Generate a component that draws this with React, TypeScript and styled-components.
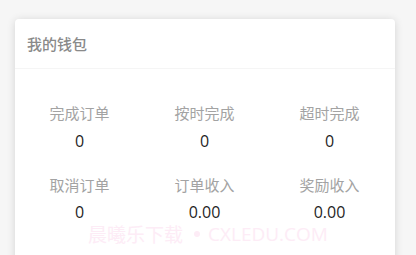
import React from "react";
import styled, { createGlobalStyle } from "styled-components";

const Global = createGlobalStyle`
  html, body { margin: 0; padding: 0; background: #f6f6f6; }
  body { font-family: "Noto Sans CJK SC", "Noto Sans", sans-serif; overflow: hidden; }
`;

const Page = styled.div`
  width: 416px;
  height: 255px;
  padding: 19px 21px 0 15px;
  box-sizing: border-box;
  position: relative;
  overflow: hidden;
`;

const Card = styled.div`
  background: #fff;
  border-radius: 4px;
  box-shadow: 0 1px 8px rgba(0, 0, 0, 0.14);
  height: 260px;
`;

const Header = styled.div`
  height: 49px;
  line-height: 49px;
  padding-left: 12px;
  font-size: 15px;
  font-weight: 500;
  color: #8a8a8a;
  border-bottom: 1px solid #f5f5f5;
`;

const Grid = styled.div`
  display: grid;
  grid-template-columns: repeat(3, 125px);
  row-gap: 22px;
  padding: 33px 0 0 2px;
`;

const Cell = styled.div`
  display: flex;
  flex-direction: column;
  align-items: center;
  gap: 5.5px;
`;

const Label = styled.div`
  font-size: 15px;
  line-height: 22px;
  color: #a3a3a3;
`;

const Value = styled.div`
  font-family: "Open Sans", "Noto Sans", sans-serif;
  font-size: 16px;
  line-height: 22px;
  color: #1f1f1f;
`;

const Watermark = styled.div`
  position: absolute;
  left: 88px;
  top: 224px;
  display: flex;
  align-items: center;
  font-size: 19px;
  line-height: 20px;
  color: #fdecf6;
  white-space: nowrap;
`;

const Dot = styled.span`
  width: 6px;
  height: 6px;
  border-radius: 50%;
  background: #fdecf6;
  margin: 0 8px 0 11px;
`;

const Latin = styled.span`
  font-family: "Open Sans", "Noto Sans", sans-serif;
  font-size: 19px;
`;

const items = [
  ["完成订单", "0"],
  ["按时完成", "0"],
  ["超时完成", "0"],
  ["取消订单", "0"],
  ["订单收入", "0.00"],
  ["奖励收入", "0.00"],
];

export default function App() {
  return (
    <>
      <Global />
      <Page>
        <Card>
          <Header>我的钱包</Header>
          <Grid>
            {items.map(([l, v]) => (
              <Cell key={l}>
                <Label>{l}</Label>
                <Value>{v}</Value>
              </Cell>
            ))}
          </Grid>
        </Card>
        <Watermark>
          晨曦乐下载
          <Dot />
          <Latin>CXLEDU.COM</Latin>
        </Watermark>
      </Page>
    </>
  );
}
